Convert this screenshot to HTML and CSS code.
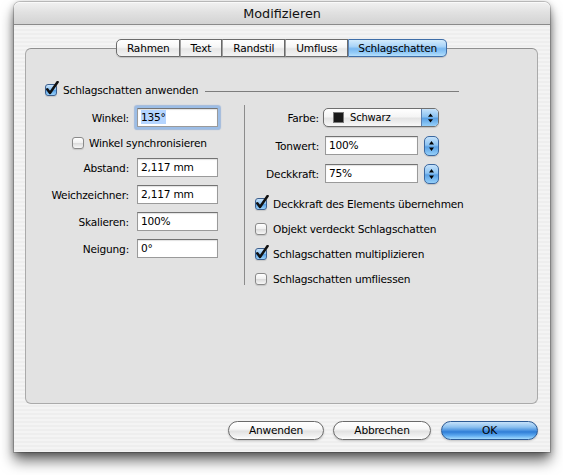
FILE: index.html
```
<!DOCTYPE html>
<html lang="de">
<head>
<meta charset="utf-8">
<title>Modifizieren</title>
<link rel="stylesheet" href="styles.css">
</head>
<body>
<div class="window">
  <div class="titlebar">Modifizieren</div>
  <div class="wbody">
    <div class="tabs">
      <div class="tab first">Rahmen</div>
      <div class="tab mid">Text</div>
      <div class="tab mid">Randstil</div>
      <div class="tab mid">Umfluss</div>
      <div class="tab sel last">Schlagschatten</div>
    </div>
    <div class="panel">
      <div class="header">
        <span class="cb on"><svg class="check" width="14" height="15" viewBox="0 0 14 15"><path d="M2.3 8.2 L5 12 L12.6 1" fill="none" stroke="#111" stroke-width="2.5" stroke-linecap="round" stroke-linejoin="round"/></svg></span>
        <span class="htext">Schlagschatten anwenden</span>
        <span class="rule"></span>
      </div>
      <div class="cols">
        <div class="left">
          <div class="row"><span class="lbl">Winkel:</span><div class="field focus"><span class="hl">135°</span></div></div>
          <div class="cbrow sync"><span class="cb"></span><span>Winkel synchronisieren</span></div>
          <div class="row"><span class="lbl">Abstand:</span><div class="field">2,117 mm</div></div>
          <div class="row"><span class="lbl">Weichzeichner:</span><div class="field">2,117 mm</div></div>
          <div class="row"><span class="lbl">Skalieren:</span><div class="field">100%</div></div>
          <div class="row"><span class="lbl">Neigung:</span><div class="field">0°</div></div>
        </div>
        <div class="divider"></div>
        <div class="right">
          <div class="row"><span class="lbl">Farbe:</span>
            <div class="select">
              <span class="swatch"></span><span class="stext">Schwarz</span>
              <span class="sarrows"><svg width="7" height="12" viewBox="0 0 7 12"><path d="M3.5 1.5 L6 4.8 H1Z M3.5 10.5 L6 7.2 H1Z" fill="#000"/></svg></span>
            </div>
          </div>
          <div class="row"><span class="lbl">Tonwert:</span><div class="field rf">100%</div>
            <span class="stepper"><svg width="7" height="14" viewBox="0 0 7 14"><path d="M3.5 2 L6 5.5 H1Z M3.5 12 L6 8.5 H1Z" fill="#000"/></svg></span></div>
          <div class="row"><span class="lbl">Deckkraft:</span><div class="field rf">75%</div>
            <span class="stepper"><svg width="7" height="14" viewBox="0 0 7 14"><path d="M3.5 2 L6 5.5 H1Z M3.5 12 L6 8.5 H1Z" fill="#000"/></svg></span></div>
          <div class="checks">
            <div class="cbrow"><span class="cb on"><svg class="check" width="14" height="15" viewBox="0 0 14 15"><path d="M2.3 8.2 L5 12 L12.6 1" fill="none" stroke="#111" stroke-width="2.5" stroke-linecap="round" stroke-linejoin="round"/></svg></span><span>Deckkraft des Elements übernehmen</span></div>
            <div class="cbrow"><span class="cb"></span><span>Objekt verdeckt Schlagschatten</span></div>
            <div class="cbrow"><span class="cb on"><svg class="check" width="14" height="15" viewBox="0 0 14 15"><path d="M2.3 8.2 L5 12 L12.6 1" fill="none" stroke="#111" stroke-width="2.5" stroke-linecap="round" stroke-linejoin="round"/></svg></span><span>Schlagschatten multiplizieren</span></div>
            <div class="cbrow"><span class="cb"></span><span>Schlagschatten umfliessen</span></div>
          </div>
        </div>
      </div>
    </div>
    <div class="buttons">
      <div class="btn b1">Anwenden</div>
      <div class="btn b2">Abbrechen</div>
      <div class="btn ok">OK</div>
    </div>
  </div>
</div>
</body>
</html>
```
FILE: styles.css
```
* { box-sizing: border-box; }
html, body { margin: 0; padding: 0; background: #ffffff; }
html, body { height: 475px; }
body {
  font-family: "DejaVu Sans", "Liberation Sans", sans-serif;
  font-size: 10.6px;
  letter-spacing: -0.2px;
  color: #000;
  padding-top: 2px;
  overflow: hidden;
}
.window {
  margin: 0 0 0 14px;
  width: 536px;
  height: 450px;
  border-radius: 6px 6px 0 0;
  box-shadow: 0 9px 14px rgba(0,0,0,0.55), 0 2px 7px rgba(0,0,0,0.35), 0 0 0 1px rgba(0,0,0,0.18);
}
.titlebar {
  height: 23px;
  line-height: 22px;
  text-align: center;
  font-size: 12.8px;
  letter-spacing: 0;
  color: #111;
  border-radius: 6px 6px 0 0;
  background: linear-gradient(to bottom, #f0f0f0 0%, #e1e1e1 45%, #d3d3d3 100%);
  border-bottom: 1px solid #8a8a8a;
  border-top: 1px solid #fafafa;
}
.wbody {
  height: 427px;
  padding: 14px 12px 0 11px;
  background: repeating-linear-gradient(to bottom, #eeeeee 0px, #eeeeee 2px, #f4f4f4 2px, #f4f4f4 4px);
}
.tabs {
  position: relative;
  z-index: 1;
  display: flex;
  justify-content: center;
  height: 18px;
  margin-bottom: -9px;
}
.tab {
  height: 18px;
  line-height: 16px;
  padding: 0 9px;
  border: 1px solid #6c6c6c;
  border-left: none;
  background: linear-gradient(to bottom, #ffffff 0%, #f6f6f6 45%, #e6e6e6 55%, #f3f3f3 100%);
  box-shadow: 0 1px 1px rgba(0,0,0,0.15);
}
.tab.mid { padding: 0 10px; }
.tab + .tab { border-left: 1px solid #a0a0a0; }
.tab.first { border-left: 1px solid #6c6c6c; border-radius: 5px 0 0 5px; padding-left: 10px; }
.tab.last { border-radius: 0 5px 5px 0; }
.tab.sel {
  border-color: #3f6ea8;
  border-left-color: #5d84b5;
  background: linear-gradient(to bottom, #d3ebfc 0%, #a9d4f8 40%, #79b8f0 55%, #94cbf7 80%, #b6e0fc 100%);
}
.panel {
  height: 356px;
  border: 1px solid #aaaaaa;
  border-top-color: #909090;
  border-radius: 6px;
  background: #e2e2e2;
  padding-top: 34px;
}
.header {
  display: flex;
  align-items: center;
  height: 14px;
  padding-left: 19px;
  margin-right: 78px;
}
.htext { margin-left: 6px; }
.rule {
  flex: 1;
  height: 1px;
  background: #7d7d7d;
  margin-left: 7px;
  align-self: flex-end;
  margin-bottom: 5px;
}
.cb {
  position: relative;
  flex: none;
  width: 12px;
  height: 12px;
  border: 1px solid #8a8a8a;
  border-radius: 3px;
  background: linear-gradient(to bottom, #ffffff 0%, #f1f1f1 45%, #dcdcdc 55%, #f7f7f7 100%);
  box-shadow: 0 1px 1px rgba(0,0,0,0.12);
}
.cb.on {
  border-color: #3c5f8e;
  background: linear-gradient(to bottom, #c8e3fb 0%, #8ec4f3 45%, #5aa2e6 55%, #9ad2fb 100%);
}
.check { position: absolute; left: -1px; top: -4px; }
.cols {
  display: flex;
  margin-top: 11px;
}
.left { width: 218px; }
.divider {
  width: 1px;
  height: 180px;
  margin-top: -3px;
  background: #8c8c8c;
}
.right { width: 230px; }
.row {
  display: flex;
  align-items: center;
  height: 19px;
  gap: 8px;
}
.left .row + .row { margin-top: 8px; }
.lbl { text-align: right; flex: none; }
.left .lbl { width: 103px; }
.field {
  height: 19px;
  width: 81px;
  border: 1px solid #9a9a9a;
  border-top-color: #737373;
  background: #ffffff;
  box-shadow: inset 0 1px 1px rgba(0,0,0,0.12);
  padding-left: 3px;
  line-height: 17px;
  white-space: nowrap;
}
.field.focus {
  box-shadow: 0 0 0 2px #9cbde6, 0 0 1px 3px rgba(120,160,215,0.6), inset 0 1px 1px rgba(0,0,0,0.12);
  border-radius: 1px;
}
.hl { background: #b5d5ff; padding: 1px 0; }
.cbrow {
  display: flex;
  align-items: center;
  gap: 6px;
}
.sync {
  height: 14px;
  margin: 9px 0 8px;
  padding-left: 46px;
  gap: 5px;
}
.right .row { gap: 6px; }
.right .row + .row { margin-top: 9px; }
.right .lbl { width: 74px; }
.right .row:first-child { gap: 4px; }
.rf { width: 93px; }
.select {
  display: flex;
  align-items: center;
  width: 116px;
  height: 19px;
  border: 1px solid #6f6f6f;
  border-radius: 5px;
  background: linear-gradient(to bottom, #ffffff 0%, #f5f5f5 45%, #e4e4e4 55%, #f8f8f8 100%);
  box-shadow: 0 1px 1px rgba(0,0,0,0.15);
}
.swatch {
  width: 11px;
  height: 11px;
  margin-left: 9px;
  background: #1a1a1a;
  border: 1px solid #7a7a7a;
  flex: none;
}
.stext { margin-left: 6px; flex: 1; font-size: 10px; }
.sarrows {
  width: 17px;
  align-self: stretch;
  display: flex;
  align-items: center;
  justify-content: center;
  border-left: 1px solid #5b7fb0;
  border-radius: 0 4px 4px 0;
  background: linear-gradient(to bottom, #c5e2fb 0%, #8cc3f2 45%, #5aa1e5 55%, #95cff9 100%);
}
.stepper {
  width: 15px;
  height: 20px;
  display: flex;
  align-items: center;
  justify-content: center;
  border: 1px solid #3b68a0;
  border-radius: 5px;
  background: linear-gradient(to bottom, #c5e2fb 0%, #8cc3f2 45%, #5aa1e5 55%, #95cff9 100%);
  box-shadow: 0 1px 1px rgba(0,0,0,0.15);
}
.checks { margin-top: 8px; padding-left: 10px; }
.checks .cbrow { height: 25px; }
.buttons {
  display: flex;
  justify-content: flex-end;
  margin-top: 17px;
}
.btn {
  height: 19px;
  line-height: 17px;
  text-align: center;
  border: 1px solid #6a6a6a;
  border-radius: 10px;
  background: linear-gradient(to bottom, #ffffff 0%, #f7f7f7 40%, #e2e2e2 55%, #f2f2f2 85%, #ffffff 100%);
  box-shadow: 0 1px 2px rgba(0,0,0,0.2);
}
.b1 { width: 96px; }
.b2 { width: 98px; margin-left: 9px; }
.ok {
  width: 97px;
  margin-left: 10px;
  border-color: #2c5a94;
  background: linear-gradient(to bottom, #c6e2fa 0%, #8cc0ef 30%, #4a92e0 50%, #2f7dd6 58%, #5eaaf0 80%, #a3dafd 100%);
}
```
